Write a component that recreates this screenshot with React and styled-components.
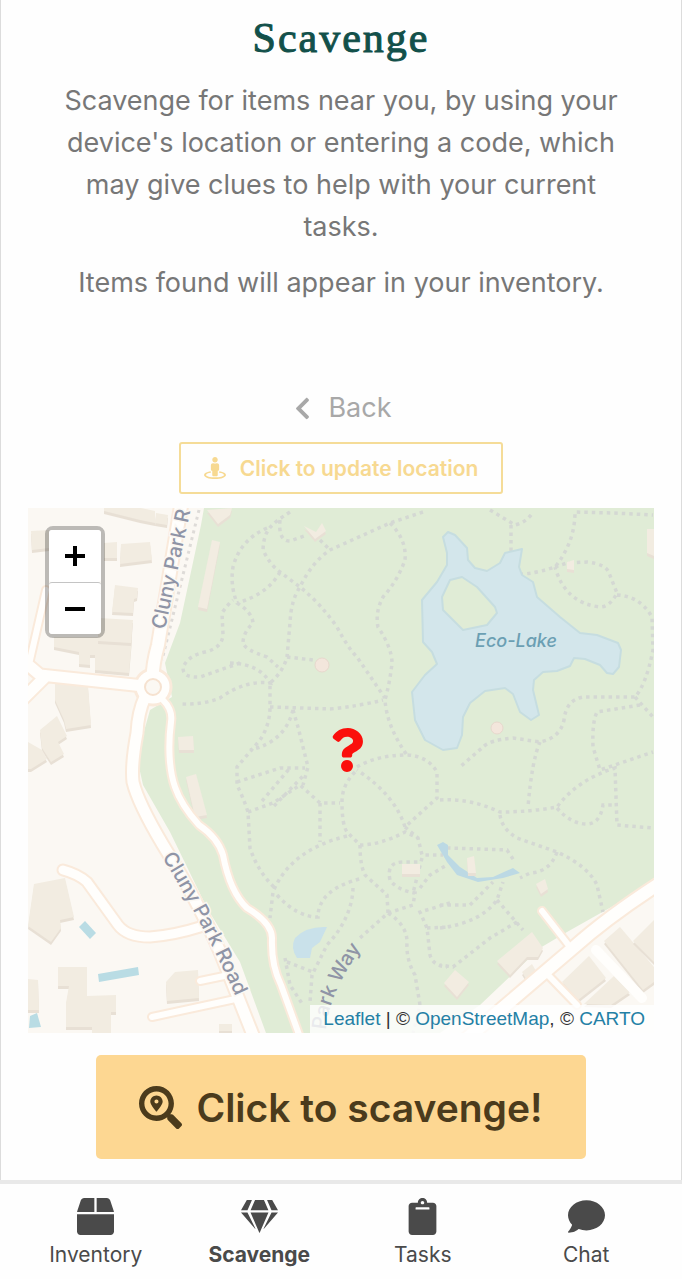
import styled, { createGlobalStyle } from 'styled-components';
import {
  FaBox,
  FaChevronLeft,
  FaClipboard,
  FaComment,
  FaGem,
  FaQuestion,
  FaSearchLocation,
  FaStreetView,
} from 'react-icons/fa';

const GlobalStyle = createGlobalStyle`
    * {
        box-sizing: border-box;
    }
    body {
        margin: 0;
        background-color: #fefefe;
        font-family: Inter, "Liberation Sans", sans-serif;
    }
`

const Page = styled.div`
    display: flex;
    flex-direction: column;
    min-height: 100vh;
`
const Main = styled.main`
    flex: 1;
    display: flex;
    flex-direction: column;
    align-items: center;
    padding: 12px 27px 21px;
    border-left: 1px solid #dcdcdc;
    border-right: 1px solid #dcdcdc;
`
const Title = styled.h1`
    margin: 0 0 16px;
    font-family: "Liberation Serif", serif;
    font-size: 42px;
    font-weight: 400;
    line-height: 52px;
    letter-spacing: 2px;
    color: #12504a;
    -webkit-text-stroke: 1px #12504a;
`
const Intro = styled.div`
    display: flex;
    flex-direction: column;
    gap: 14px;
    padding: 0 32px;
    margin-bottom: 83px;
`
const Text = styled.p`
    margin: 0;
    font-size: 27px;
    line-height: 42px;
    text-align: center;
    color: #777777;
`
const BackLink = styled.a`
    display: flex;
    align-items: center;
    gap: 13px;
    margin-bottom: 13px;
    font-size: 27px;
    line-height: 42px;
    color: #a8a8a8;
    text-decoration: none;
`
const UpdateButton = styled.button`
    display: flex;
    align-items: center;
    gap: 14px;
    height: 52px;
    padding: 0 23px;
    margin-bottom: 14px;
    border: 2px solid #f5dc98;
    border-radius: 3px;
    background-color: #fefefe;
    font-family: inherit;
    font-size: 21px;
    font-weight: 600;
    color: #f7d991;
`
const ScavengeButton = styled.button`
    display: flex;
    align-items: center;
    justify-content: center;
    gap: 14px;
    height: 104px;
    padding: 0 43px;
    border: none;
    border-radius: 5px;
    background-color: #fdd792;
    font-family: inherit;
    font-size: 39px;
    font-weight: 600;
    color: #4b3b1c;
`
const MapBox = styled.section`
    position: relative;
    width: 100%;
    margin-bottom: 22px;
    overflow: hidden;
`
const MapDrawing = styled.svg`
    display: block;
    width: 100%;
    height: auto;
`
const Marker = styled.div`
    position: absolute;
    left: 51%;
    top: 46%;
    display: flex;
    transform: translate(-50%, -50%);
    color: #fb0f0c;
`
const ZoomControl = styled.div`
    position: absolute;
    top: 18px;
    left: 17px;
    display: flex;
    flex-direction: column;
    border: 4px solid rgba(0, 0, 0, 0.25);
    border-radius: 8px;
    background-clip: padding-box;
`
const ZoomButton = styled.button`
    display: flex;
    align-items: center;
    justify-content: center;
    width: 52px;
    height: 52px;
    padding: 0;
    border: none;
    border-radius: 3px;
    background-color: white;

    & + & {
        border-top: 1px solid #c4c4c4;
    }
`
const Attribution = styled.div`
    position: absolute;
    right: 0;
    bottom: 0;
    padding: 0 9px 0 13px;
    background-color: rgba(255, 255, 255, 0.8);
    font-family: "Liberation Sans", Arial, sans-serif;
    font-size: 19px;
    line-height: 28px;
    color: #333333;
    white-space: nowrap;
`
const MapLink = styled.a`
    color: #2480a5;
    text-decoration: none;
`
const Nav = styled.nav`
    display: grid;
    grid-template-columns: repeat(4, 1fr);
    height: 99px;
    padding: 14px 14px 0;
    border-top: 4px solid #e9e9e9;
`
const NavItem = styled.a`
    display: flex;
    flex-direction: column;
    align-items: center;
    gap: 6px;
    font-size: 21px;
    line-height: 28px;
    font-weight: ${props => props.$active ? 700 : 400};
    color: #4a4a4a;
    text-decoration: none;
`

const buildings = [
  'M31 531 L49 530 L49 548 L32 550Z',
  'M104 508 L141 508 L155 511 L155 523 L140 520 L104 511Z',
  'M156 513 L168 515 L167 525 L155 523Z',
  'M104 543 L117 542 L117 558 L104 558Z',
  'M121 544 L150 542 L152 560 L120 564Z',
  'M115 585 L138 588 L137 598 L134 599 L133 613 L112 612Z',
  'M54 637 L132 637 L129 673 L95 670 L95 655 L90 655 L90 665 L79 664 L79 652 L54 647Z',
  'M99 618 L133 620 L131 643 L98 641Z',
  'M55 683 L88 686 L91 725 L66 729 L64 720 L55 700Z',
  'M40 730 L57 716 L67 736 L58 742 L64 754 L51 762 L42 748Z',
  'M28 742 L42 750 L47 759 L31 769 L28 769Z',
  'M212 540 L220 542 L207 609 L198 607Z',
  'M207 510 L232 508 L230 515 L218 524Z',
  'M304 526 L316 532 L322 523 L326 531 L315 539Z',
  'M647 529 L654 529 L654 556 L647 553Z',
  'M567 562 L574 560 L574 570 L567 569Z',
  'M178 737 L193 736 L194 750 L179 750Z',
  'M186 777 L196 774 L207 815 L195 817Z',
  'M34 884 L65 878 L74 917 L60 920 L61 928 L51 942 L28 926Z',
  'M58 967 L87 967 L87 996 L116 995 L116 1012 L111 1012 L111 1033 L92 1033 L92 1027 L66 1027 L66 1003 L69 986 L58 986Z',
  'M28 979 L38 980 L39 1010 L28 1010Z',
  'M175 972 L198 970 L199 998 L167 1001 L166 982Z',
  'M219 1024 L232 1024 L232 1031 L219 1031Z',
  'M402 864 L420 864 L420 874 L402 874Z',
  'M467 858 L474 856 L476 873 L468 873Z',
  'M536 884 L545 879 L548 889 L541 894Z',
  'M497 961 L532 932 L543 948 L538 957 L527 957 L510 975Z',
  'M522 972 L532 964 L539 976 L528 982Z',
  'M444 983 L455 970 L469 982 L457 997Z',
  'M562 982 L589 956 L606 978 L578 1000Z',
  'M604 941 L620 927 L654 967 L654 982 L643 990Z',
  'M633 941 L654 920 L654 962Z',
  'M584 1004 L614 976 L630 992 L611 1005Z',
]

const pools = [
  'M79 927 L85 921 L96 933 L90 939Z',
  'M98 974 L138 967 L139 975 L99 982Z',
  'M30 1016 L37 1013 L41 1027 L29 1028Z',
]

const footpaths = [
  'M290 512 C270 525 264 530 263 550 Q270 565 280 572 L300 587 Q320 603 337 627 Q348 648 357 657 L385 698',
  'M423 512 L390 523 L330 550 Q312 562 300 587 Q291 600 290 623 L287 657 Q283 672 270 683 L270 707 Q270 725 260 740 L237 767 L237 785 Q243 797 248 812 L250 848 Q258 872 275 888',
  'M390 523 Q407 540 405 560 Q398 580 383 597 Q375 612 378 627 Q392 648 392 663 Q390 682 385 700 Q387 727 407 755',
  'M270 707 L330 709 Q360 706 383 700',
  'M267 528 Q240 540 233 567 Q230 585 237 603 Q252 612 253 623 Q243 633 243 643 Q245 650 267 657 L278 667',
  'M280 572 Q268 594 237 603',
  'M240 663 L200 677 Q183 678 183 668 Q187 656 205 652 Q222 648 223 635 L222 613 Q228 604 233 600 M230 663 Q260 664 270 683 Q245 680 220 698 Q202 705 180 704',
  'M280 520 Q278 541 290 541 L304 536 M320 540 L330 550',
  'M287 657 L313 660',
  'M293 710 L298 727 L308 767 L303 785 M293 710 Q285 742 250 750',
  'M357 767 Q377 755 407 755 Q428 756 437 772 L437 798 L405 827 Q395 795 357 770',
  'M490 510 L515 525 Q527 522 533 512 M511 525 L511 550 L508 573 Q525 577 555 567 Q575 542 575 512 L613 513 L653 515',
  'M555 567 L567 563 L587 562 Q606 564 609 573 L617 593 Q610 607 600 607 Q565 603 555 567',
  'M617 595 Q640 596 652 617 L653 650 Q646 685 635 697 L583 697 Q566 700 564 720 Q560 738 540 742 L513 738 Q490 740 483 747 L460 767',
  'M635 697 L653 717 M640 705 L597 712 Q592 722 593 747 L600 770 L653 752 M540 742 Q532 760 528 807',
  'M440 800 Q470 798 500 812 Q530 812 557 807 Q577 780 615 768 L617 825 L653 828',
  'M557 808 Q570 823 585 824 Q600 825 603 805 L615 805',
  'M500 815 Q502 829 517 838 L557 852 Q588 866 597 885 L603 912 M557 852 Q550 872 530 873 L520 878',
  'M447 848 L507 850 L515 862 M440 905 L470 905 L493 882',
  'M440 928 Q480 923 497 900 L503 882 M497 900 L523 930 M517 922 L490 938 L453 967 L440 965',
  'M355 772 Q342 785 342 802 Q342 825 347 832 L360 845 Q360 865 365 875 L387 895 L388 913 L360 938',
  'M360 845 Q380 845 405 832 L418 838 L422 855 L443 855',
  'M347 836 Q290 850 273 892 L270 918 M277 895 Q297 917 318 917 Q318 889 363 878',
  'M353 888 Q352 918 327 945 L312 975 L310 1002',
  'M248 812 L273 803 L300 785 L320 803 L340 803 M320 803 L320 842 M237 782 L280 768 L305 768',
  'M262 801 L290 768 M274 806 L303 776',
  'M388 913 L413 905 L415 893 Q397 890 390 880 Q386 862 403 862 L420 862',
  'M388 913 Q407 925 407 942 Q406 960 415 975 L420 1005 L413 1033',
  'M450 903 L420 912 L427 928 L430 955 Q433 966 447 967 M427 928 L450 927 M420 888 L430 875 L447 865',
  'M405 827 L418 838 M422 858 L413 893',
  'M285 958 L290 985 L303 1005 M287 962 L313 972',
]

const roads = [
  { d: 'M153 687 Q151 670 158 645 L182 500', w: 12 },
  { d: 'M145 697 Q138 712 137 733 Q131 765 133 782 Q138 803 163 845 Q200 905 220 952 L255 1040', w: 11 },
  { d: 'M153 687 L40 675 L20 658 M44 678 L20 702', w: 11 },
  { d: 'M30 660 L46 590', w: 6 },
  { d: 'M63 870 Q78 874 87 882 L118 925 Q127 937 150 937 Q175 935 200 927', w: 9 },
  { d: 'M152 1017 L240 998 M200 981 L224 976', w: 6 },
  { d: 'M163 700 Q173 710 171 722 C168 745 169 770 175 787 Q181 805 199 825 Q218 838 223 855 Q230 892 247 908 Q272 923 272 938 Q271 965 281 985 L301 1040', w: 6 },
  { d: 'M665 880 Q610 915 573 948 L465 1040', w: 12 },
  { d: 'M542 911 L570 947 M549 976 L577 1005', w: 6 },
]

const StreetMap = () => (
  <MapDrawing viewBox="28 508 626 525" role="img" aria-label="Map of the park around Eco-Lake">
    <rect x="28" y="508" width="626" height="525" fill="#fbf8f3" />
    <path
      fill="#e0ecd6"
      d="M204 508 L201 525 L180 623 L165 663 L172 697 L150 710 L143 735 L139 767 L143 785 L170 832 L207 908 L240 962 L266 1033 L440 1033 L480 1005 L540 948 L567 932 L654 883 L654 508Z"
    />
    <path
      fill="none"
      stroke="#d4d8d3"
      strokeWidth="3.5"
      strokeDasharray="3.5 4"
      d={footpaths.join(' ')}
    />
    <path fill="none" stroke="#dedbd8" strokeWidth="3" strokeDasharray="3 4" d="M199 510 L162 660" />

    {/* lake with its island */}
    <g strokeLinejoin="round">
      <path
        fill="#d3e6eb"
        stroke="#c6dde0"
        strokeWidth="2"
        fillRule="evenodd"
        d="M443 537 L448 532 L455 535 L467 548 L468 560 L475 568 L487 571 L500 563 L505 553 L522 549 L519 567 L522 575 L533 582 L537 597 L560 617 L580 633 L597 635 L618 643 L621 650 L619 667 L613 674 L607 673 L600 665 L585 659 L574 658 L570 666 L557 671 L543 672 L534 680 L533 690 L539 715 L531 720 L520 712 L513 694 L505 688 L485 691 L470 703 L463 717 L462 735 L457 748 L443 750 L425 740 L415 720 L412 692 L425 675 L437 664 L432 652 L423 642 L422 600 L437 582 L447 565 L447 553Z M442 597 L450 580 L462 577 L477 587 L495 607 L497 613 L487 625 L463 630 L443 610Z"
      />
      <path fill="#c9e1ea" d="M327 927 Q306 926 295 938 Q290 948 297 958 L310 958 L312 948 L320 942Z" />
      <path
        fill="#bcd9e4"
        d="M437 845 L443 842 L448 845 L448 855 L460 867 L477 878 L493 877 L513 868 L520 873 L503 878 L478 882 L457 875 L447 862Z"
      />
    </g>

    {buildings.map((d) => (
      <g key={d}>
        <path d={d} fill="#e8e0d5" transform="translate(0 3)" />
        <path d={d} fill="#f2ece1" />
      </g>
    ))}
    <g fill="#f3e6dc" stroke="#e7d8cd">
      <circle cx="322" cy="665" r="7" />
      <circle cx="497" cy="728" r="6" />
    </g>
    {pools.map((d) => <path key={d} d={d} fill="#b9dce4" />)}

    {/* every casing goes under every road, so that the crossings stay open */}
    <g fill="none" stroke="#faeadb" strokeLinecap="round">
      {roads.map((road) => <path key={road.d} d={road.d} strokeWidth={road.w + 4} />)}
      <circle cx="153" cy="687" r="18" fill="#ffffff" strokeWidth="3" />
    </g>
    <g fill="none" stroke="#fffefc" strokeLinecap="round">
      {roads.map((road) => <path key={road.d} d={road.d} strokeWidth={road.w} />)}
      <path d="M596 950 L642 998" strokeWidth="10" />
    </g>
    <circle cx="153" cy="687" r="16" fill="#fffefc" />
    <circle cx="153" cy="687" r="8" fill="#fbf8f3" stroke="#f6e2d0" strokeWidth="2" />

    <path id="park-road-north" d="M165 630 L194 494" fill="none" />
    <path id="park-road-south" d="M162 857 Q206 928 240 1006" fill="none" />
    <path id="park-way" d="M326 1030 Q328 992 370 936" fill="none" />
    <g fontFamily="Inter, sans-serif" fontSize="20" fontWeight="500" fill="#8f94a6" stroke="#fbf8f3" strokeWidth="3" paintOrder="stroke">
      <text><textPath href="#park-road-north">Cluny Park R</textPath></text>
      <text><textPath href="#park-road-south">Cluny Park Road</textPath></text>
      <text stroke="#e0ecd6"><textPath href="#park-way">Park Way</textPath></text>
    </g>
    <text x="475" y="647" fontFamily="Inter, sans-serif" fontSize="18" fontStyle="italic" fontWeight="500" fill="#6b9fb3">
      Eco-Lake
    </text>
  </MapDrawing>
)

const tabs = [
  { name: 'Inventory', icon: FaBox },
  { name: 'Scavenge', icon: FaGem },
  { name: 'Tasks', icon: FaClipboard },
  { name: 'Chat', icon: FaComment },
]

const App = () => {
  return (
    <Page>
      <GlobalStyle />
      <Main>
        <Title>Scavenge</Title>
        <Intro>
          <Text>
            Scavenge for items near you, by using your device's location or entering a code, which
            may give clues to help with your current tasks.
          </Text>
          <Text>Items found will appear in your inventory.</Text>
        </Intro>
        <BackLink href="#back"><FaChevronLeft size={25} /> Back</BackLink>
        <UpdateButton type="button"><FaStreetView size={22} /> Click to update location</UpdateButton>
        <MapBox>
          <StreetMap />
          <Marker><FaQuestion size={44} /></Marker>
          <ZoomControl>
            <ZoomButton type="button" aria-label="Zoom in">
              <svg width="22" height="22" viewBox="0 0 22 22" stroke="#000000" strokeWidth="4">
                <path d="M11 1V21M1 11H21" />
              </svg>
            </ZoomButton>
            <ZoomButton type="button" aria-label="Zoom out">
              <svg width="22" height="22" viewBox="0 0 22 22" stroke="#000000" strokeWidth="4">
                <path d="M1 11H21" />
              </svg>
            </ZoomButton>
          </ZoomControl>
          <Attribution>
            <MapLink href="#leaflet">Leaflet</MapLink> | © <MapLink href="#osm">OpenStreetMap</MapLink>, © <MapLink href="#carto">CARTO</MapLink>
          </Attribution>
        </MapBox>
        <ScavengeButton type="button"><FaSearchLocation size={43} /> Click to scavenge!</ScavengeButton>
      </Main>
      <Nav>
        {tabs.map(({ name, icon: Icon }) => (
          <NavItem key={name} href={`#${name.toLowerCase()}`} $active={name === 'Scavenge'}>
            <Icon size={37} />
            {name}
          </NavItem>
        ))}
      </Nav>
    </Page>
  )
}

export default App
